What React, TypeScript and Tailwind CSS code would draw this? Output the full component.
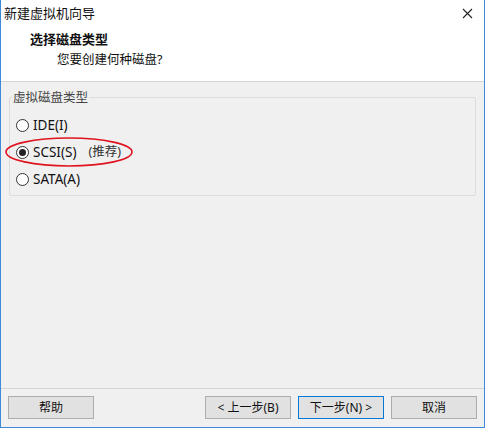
const font = "font-['Segoe_UI','Noto_Sans','Noto_Sans_CJK_SC',sans-serif]";

function Radio({ checked }: { checked?: boolean }) {
  return (
    <span className="w-[13px] h-[13px] rounded-full border border-[#333] bg-white flex items-center justify-center">
      {checked && <span className="w-[7px] h-[7px] rounded-full bg-[#222]" />}
    </span>
  );
}

function Btn({ label, primary }: { label: string; primary?: boolean }) {
  return (
    <button
      className={`w-[86px] h-[23px] text-[12px] text-[#111] bg-[#e1e1e1] border ${
        primary ? "border-[#0078d7]" : "border-[#adadad]"
      } flex items-center justify-center`}
    >
      {label}
    </button>
  );
}

export default function App() {
  return (
    <div className={`w-[485px] h-[428px] bg-[#f0f0f0] border-x border-b border-[#3c8ad8] flex flex-col text-[#111] ${font}`}>
      <div className="bg-white h-[81px] flex flex-col">
        <div className="h-[27px] flex items-center justify-between pl-[3px] pr-[11px]">
          <span className="text-[13px]">新建虚拟机向导</span>
          <svg width="11" height="11" viewBox="0 0 11 11" className="stroke-[#222]">
            <path d="M1 1 L10 10 M10 1 L1 10" strokeWidth="1.1" />
          </svg>
        </div>
        <div className="pl-[29px] pt-[4px] text-[13px] font-bold leading-[17px]">选择磁盘类型</div>
        <div className="pl-[56px] pt-[3px] text-[12.5px] leading-[17px]">您要创建何种磁盘?</div>
      </div>
      <div className="h-px bg-[#d5d5d5]" />
      <div className="flex-1 flex flex-col px-[8px] pt-[9px]">
        <div className="relative h-[99px] border border-[#dcdcdc] rounded-[2px] mt-[6px] pl-[6px] pt-[19px] flex flex-col gap-[11px]">
          <span className="absolute -top-[9px] left-[2px] px-[1px] bg-[#f0f0f0] text-[12.5px] text-[#444]">
            虚拟磁盘类型
          </span>
          <label className="flex items-center gap-[4px] h-[16px] text-[13.5px]">
            <Radio />
            IDE(I)
          </label>
          <label className="relative flex items-center gap-[4px] h-[16px] text-[13.5px]">
            <Radio checked />
            SCSI(S)
            <span className="ml-[8px] text-[12.5px] text-[#333]">(推荐)</span>
            <svg
              width="130"
              height="30"
              viewBox="0 0 130 30"
              className="absolute left-[-11px] top-[-7px] overflow-visible"
            >
              <ellipse cx="64" cy="15" rx="63" ry="14" fill="none" stroke="#e0141e" strokeWidth="1.6" />
            </svg>
          </label>
          <label className="flex items-center gap-[4px] h-[16px] text-[13.5px]">
            <Radio />
            SATA(A)
          </label>
        </div>
        <div className="flex-1" />
      </div>
      <div className="h-px bg-[#d5d5d5]" />
      <div className="h-[38px] flex items-center px-[7px] pb-[1px]">
        <Btn label="帮助" />
        <div className="flex-1" />
        <div className="flex gap-[7px]">
          <Btn label="< 上一步(B)" />
          <Btn label="下一步(N) >" primary />
          <Btn label="取消" />
        </div>
      </div>
    </div>
  );
}
